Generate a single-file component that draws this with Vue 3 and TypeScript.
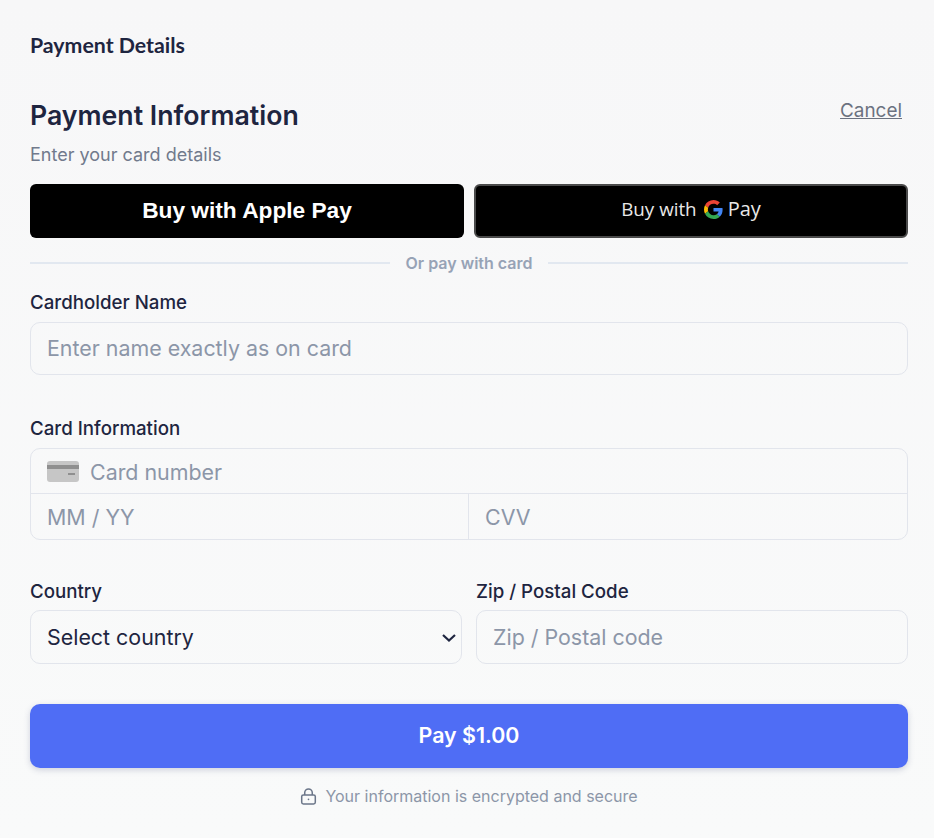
<script setup lang="ts">
const title: string = 'Payment Information'
</script>

<template>
  <main class="page">
    <h1 class="brand">Payment Details</h1>
    <header class="head">
      <h2 class="title">{{ title }}</h2>
      <a class="cancel" href="#">Cancel</a>
    </header>
    <p class="sub">Enter your card details</p>

    <div class="wallets">
      <button class="apple" type="button">Buy with Apple Pay</button>
      <button class="gpay" type="button">
        <span>Buy with</span>
        <svg class="g" viewBox="0 0 48 48" aria-hidden="true">
          <path fill="#EA4335" d="M24 9.5c3.54 0 6.71 1.22 9.21 3.6l6.85-6.85C35.9 2.38 30.47 0 24 0 14.62 0 6.51 5.38 2.56 13.22l7.98 6.19C12.43 13.72 17.74 9.5 24 9.5z"/>
          <path fill="#4285F4" d="M46.98 24.55c0-1.57-.15-3.09-.38-4.55H24v9.02h12.94c-.58 2.96-2.26 5.48-4.78 7.18l7.73 6c4.51-4.18 7.09-10.36 7.09-17.65z"/>
          <path fill="#FBBC05" d="M10.53 28.59c-.48-1.45-.76-2.99-.76-4.59s.27-3.14.76-4.59l-7.98-6.19C.92 16.46 0 20.12 0 24c0 3.88.92 7.54 2.56 10.78l7.97-6.19z"/>
          <path fill="#34A853" d="M24 48c6.48 0 11.93-2.13 15.89-5.81l-7.73-6c-2.15 1.45-4.92 2.3-8.16 2.3-6.26 0-11.57-4.22-13.47-9.91l-7.98 6.19C6.51 42.62 14.62 48 24 48z"/>
        </svg>
        <span class="gpay-word">Pay</span>
      </button>
    </div>

    <div class="divider"><span>Or pay with card</span></div>

    <label class="label holder-label" for="holder">Cardholder Name</label>
    <input id="holder" class="field holder" type="text" placeholder="Enter name exactly as on card" />

    <div class="label card-label">Card Information</div>
    <div class="card-box">
      <div class="number-row">
        <svg class="card-icon" viewBox="0 0 32 21" aria-hidden="true">
          <rect width="32" height="21" rx="3" fill="#c6c6c6" />
          <rect y="4" width="32" height="4" fill="#8f8f8f" />
          <rect x="21" y="12" width="7" height="2" fill="#8f8f8f" />
        </svg>
        <input class="bare number" type="text" placeholder="Card number" />
      </div>
      <div class="split-row">
        <input class="bare pad expiry" type="text" placeholder="MM / YY" />
        <input class="bare pad" type="text" placeholder="CVV" />
      </div>
    </div>

    <div class="two-col">
      <div class="col">
        <label class="label" for="country">Country</label>
        <div class="select-wrap">
          <select id="country" class="field select">
            <option>Select country</option>
            <option>United States</option>
            <option>Canada</option>
          </select>
          <svg class="chevron" viewBox="0 0 14 8" fill="none" stroke="#1e2540" stroke-width="2.2" aria-hidden="true">
            <path d="M1 1l6 5.5L13 1" />
          </svg>
        </div>
      </div>
      <div class="col">
        <label class="label" for="zip">Zip / Postal Code</label>
        <input id="zip" class="field" type="text" placeholder="Zip / Postal code" />
      </div>
    </div>

    <button class="pay" type="button">Pay $1.00</button>

    <p class="secure">
      <svg class="lock" viewBox="0 0 18 18" fill="none" stroke="#6b7689" stroke-width="1.6" aria-hidden="true">
        <rect x="1.8" y="7.3" width="14.4" height="9.6" rx="1.8" />
        <path d="M5 7.3V5a4 4 0 0 1 8 0v2.3" />
        <circle cx="9" cy="12" r="0.9" fill="#6b7689" stroke="none" />
      </svg>
      <span>Your information is encrypted and secure</span>
    </p>
  </main>
</template>

<style>
html, body { margin: 0; background: #f8f9f9; }
</style>

<style scoped>
.page {
  box-sizing: border-box;
  height: 838px;
  padding: 32px 26px 0 30px;
  background: linear-gradient(180deg, #f7f7f8 0%, #f9fafa 100%);
  font-family: Inter, "Liberation Sans", sans-serif;
  color: #1e2540;
}
.brand {
  margin: 0;
  font-family: Lato, sans-serif;
  font-size: 21.3px;
  line-height: 26px;
  font-weight: 700;
}
.head {
  display: flex;
  justify-content: space-between;
  align-items: flex-start;
  margin-top: 39px;
}
.title {
  margin: 0;
  font-size: 26.7px;
  line-height: 36px;
  font-weight: 600;
}
.cancel {
  margin: 3px 6px 0 0;
  font-size: 18.9px;
  line-height: 22px;
  color: #6b7280;
  text-decoration: underline;
}
.sub {
  margin: 11px 0 0;
  font-size: 18px;
  line-height: 22px;
  color: #717a8c;
}
.wallets {
  display: grid;
  grid-template-columns: 1fr 1fr;
  gap: 10px;
  margin-top: 18px;
}
.apple, .gpay {
  height: 54px;
  border-radius: 6px;
  background: #000;
  color: #fff;
  padding: 0;
}
.apple {
  border: 0;
  padding-bottom: 2px;
  font-family: "Liberation Sans", sans-serif;
  font-size: 22.7px;
  font-weight: 700;
}
.gpay {
  display: flex;
  align-items: center;
  justify-content: center;
  gap: 7px;
  border: 2px solid #4a4a4a;
  font-family: "Open Sans", sans-serif;
  font-size: 18.8px;
  line-height: 22px;
  color: #e8e8e8;
  padding-bottom: 4px;
}
.gpay-word { font-size: 20px; margin-left: -2px; }
.g { width: 19px; height: 19px; }
.divider {
  display: flex;
  align-items: center;
  gap: 16px;
  margin-top: 15px;
  height: 20px;
  font-size: 16px;
  font-weight: 600;
  color: #97a3b6;
}
.divider::before, .divider::after {
  content: "";
  flex: 1;
  height: 2px;
  background: #e2e8f0;
}
.label {
  display: block;
  font-size: 18.7px;
  line-height: 22px;
  font-weight: 500;
  color: #1e2540;
}
.holder-label { margin-top: 19px; }
.field {
  box-sizing: border-box;
  display: block;
  width: 100%;
  height: 53px;
  margin-top: 8px;
  padding: 0 16px;
  border: 1px solid #e2e5ec;
  border-radius: 10px;
  background: transparent;
  font: 400 21.4px Inter, sans-serif;
  color: #1e2540;
  outline: none;
}
.holder { padding-bottom: 2px; }
.field::placeholder, .bare::placeholder { color: #8c96a8; opacity: 1; }
.card-label { margin-top: 43px; }
.card-box {
  margin-top: 8px;
  border: 1px solid #e2e5ec;
  border-radius: 10px;
  overflow: hidden;
}
.number-row {
  display: flex;
  align-items: center;
  gap: 11px;
  height: 44px;
  padding-left: 16px;
  border-bottom: 1px solid #e2e5ec;
}
.card-icon { width: 32px; height: 21px; flex: none; }
.split-row { display: grid; grid-template-columns: 1fr 1fr; height: 45px; }
.bare {
  box-sizing: border-box;
  width: 100%;
  min-width: 0;
  border: 0;
  outline: none;
  padding: 0;
  background: transparent;
  font: 400 21.4px Inter, sans-serif;
  color: #1e2540;
}
.number { padding-top: 2px; }
.pad { padding-left: 16px; }
.expiry { border-right: 1px solid #e2e5ec; }
.two-col {
  display: grid;
  grid-template-columns: 1fr 1fr;
  gap: 14px;
  margin-top: 41px;
}
.two-col .field { height: 54px; margin-top: 7px; }
.select-wrap { position: relative; }
.select {
  appearance: none;
  -webkit-appearance: none;
  padding-right: 32px;
}
.chevron {
  position: absolute;
  right: 6px;
  top: 50%;
  width: 14px;
  height: 8px;
  transform: translateY(-3px);
  pointer-events: none;
}
.pay {
  display: block;
  width: 100%;
  height: 64px;
  margin-top: 40px;
  padding: 0 0 2px;
  border: 0;
  border-radius: 10px;
  background: #4f6df5;
  color: #fff;
  font: 600 21.4px Inter, sans-serif;
  box-shadow: 0 2px 6px rgba(60, 70, 120, 0.22);
}
.secure {
  display: flex;
  align-items: center;
  justify-content: center;
  gap: 8px;
  margin: 17px 0 0;
  font-size: 16px;
  line-height: 22px;
  color: #8c96a8;
}
.lock { width: 17px; height: 17px; }
</style>
